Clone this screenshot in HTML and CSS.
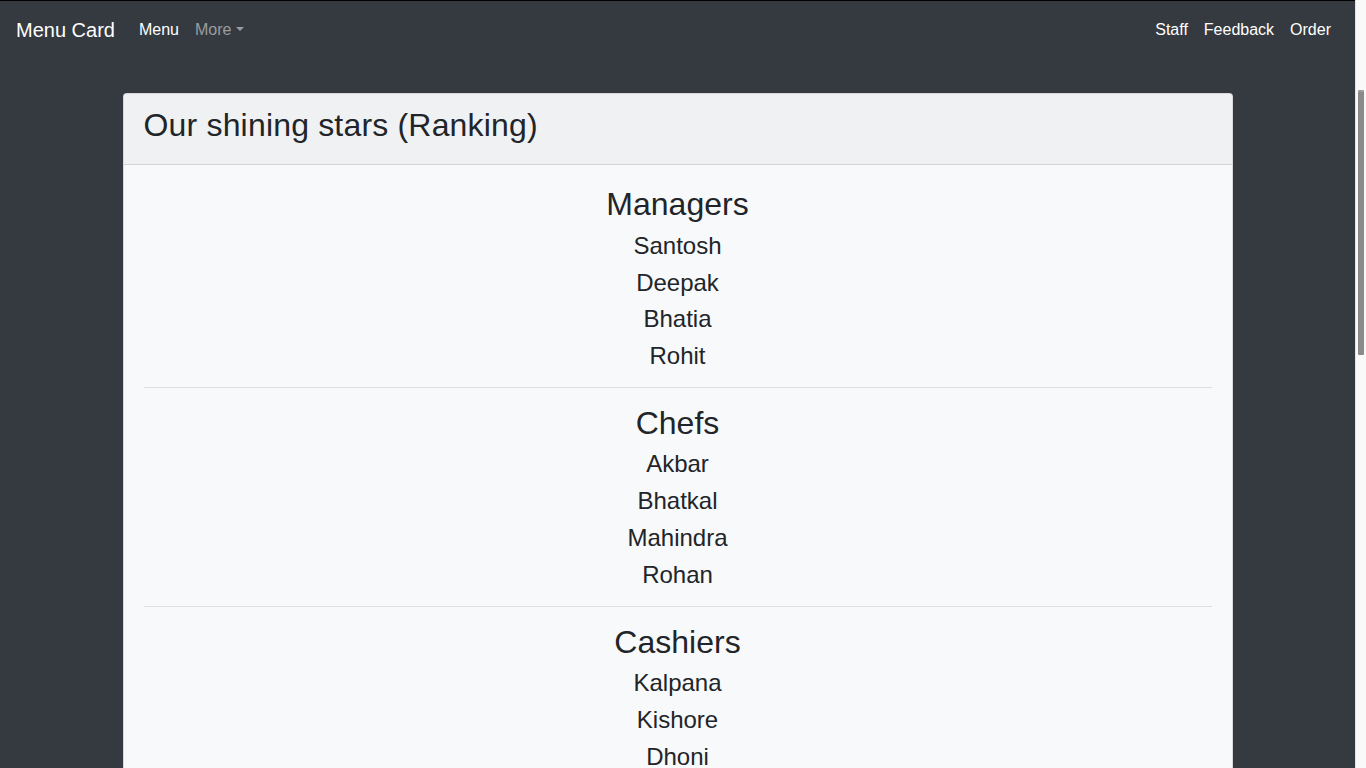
FILE: index.html
```html
<!DOCTYPE html>
<html lang="en">
<head>
<meta charset="utf-8">
<title>Menu Card</title>
<link rel="stylesheet" href="styles.css">
</head>
<body>
<div class="screen">
  <div class="page">
    <nav class="navbar">
      <a class="brand" href="#">Menu Card</a>
      <ul class="nav nav-left">
        <li><a class="nav-link" href="#">Menu</a></li>
        <li><a class="nav-link muted dropdown-toggle" href="#">More</a></li>
      </ul>
      <ul class="nav">
        <li><a class="nav-link" href="#">Staff</a></li>
        <li><a class="nav-link" href="#">Feedback</a></li>
        <li><a class="nav-link" href="#">Order</a></li>
      </ul>
    </nav>
    <main class="container">
      <div class="card">
        <div class="card-header">
          <h2 class="title">Our shining stars (Ranking)</h2>
        </div>
        <div class="card-body">
          <section class="group">
            <h2 class="group-title">Managers</h2>
            <h4 class="member">Santosh</h4>
            <h4 class="member">Deepak</h4>
            <h4 class="member">Bhatia</h4>
            <h4 class="member">Rohit</h4>
          </section>
          <hr class="divider">
          <section class="group">
            <h2 class="group-title">Chefs</h2>
            <h4 class="member">Akbar</h4>
            <h4 class="member">Bhatkal</h4>
            <h4 class="member">Mahindra</h4>
            <h4 class="member">Rohan</h4>
          </section>
          <hr class="divider">
          <section class="group">
            <h2 class="group-title">Cashiers</h2>
            <h4 class="member">Kalpana</h4>
            <h4 class="member">Kishore</h4>
            <h4 class="member">Dhoni</h4>
          </section>
        </div>
      </div>
    </main>
  </div>
  <div class="scrollbar"><div class="thumb"></div></div>
</div>
</body>
</html>
```

FILE: styles.css
```css
* { box-sizing: border-box; }

html, body {
  margin: 0;
  padding: 0;
  background: #343a40;
  font-family: "Liberation Sans", Arial, sans-serif;
  color: #212529;
}

.screen {
  display: flex;
  width: 100%;
  height: 100vh;
  overflow: hidden;
}

.page {
  flex: 1;
  min-width: 0;
  border-top: 1px solid #000;
  background: #343a40;
  overflow: hidden;
}

.scrollbar {
  width: 11px;
  flex: none;
  background: #f9f9f9;
  border-left: 1px solid #e4e4e4;
  padding-top: 90px;
  padding-left: 2px;
}

.thumb {
  width: 6px;
  height: 265px;
  background: #8a8a8a;
  border-radius: 1px;
  border-top: 2px solid #9d9d9d;
}

.navbar {
  display: flex;
  align-items: center;
  padding: 9px 16px 8px;
  background: #343a40;
}

.brand {
  font-size: 20px;
  line-height: 30px;
  padding: 5px 0;
  margin-right: 16px;
  color: #fff;
  text-decoration: none;
  white-space: nowrap;
}

.nav {
  display: flex;
  list-style: none;
  margin: 0;
  padding: 0;
}

.nav-left { margin-right: auto; }

.nav-link {
  display: block;
  padding: 8px;
  font-size: 16px;
  line-height: 24px;
  color: #fff;
  text-decoration: none;
}

.nav-link.muted { color: rgba(255, 255, 255, 0.5); }

.dropdown-toggle::after {
  display: inline-block;
  margin-left: 0.255em;
  vertical-align: 0.255em;
  content: "";
  border-top: 0.3em solid;
  border-right: 0.3em solid transparent;
  border-left: 0.3em solid transparent;
  border-bottom: 0;
}

.container {
  max-width: 1140px;
  margin: 0 auto;
  padding: 35px 15px 0;
}

.card {
  background: #f8f9fa;
  border: 1px solid rgba(0, 0, 0, 0.125);
  border-radius: 4px;
}

.card-header {
  padding: 12px 20px;
  background: rgba(0, 0, 0, 0.03);
  border-bottom: 1px solid rgba(0, 0, 0, 0.125);
  border-radius: 3px 3px 0 0;
}

.title {
  margin: 0 0 8px;
  font-size: 32px;
  line-height: 1.2;
  font-weight: 400;
  letter-spacing: 0.18px;
}

.card-body {
  padding: 20px;
}

.group { text-align: center; }

.group-title {
  margin: 0 0 8px;
  font-size: 32px;
  line-height: 1.2;
  font-weight: 400;
}

.member {
  margin: 0 0 8px;
  font-size: 24px;
  line-height: 1.2;
  font-weight: 400;
}

.divider {
  margin: 16px 0;
  border: 0;
  border-top: 1px solid rgba(0, 0, 0, 0.1);
}
```
